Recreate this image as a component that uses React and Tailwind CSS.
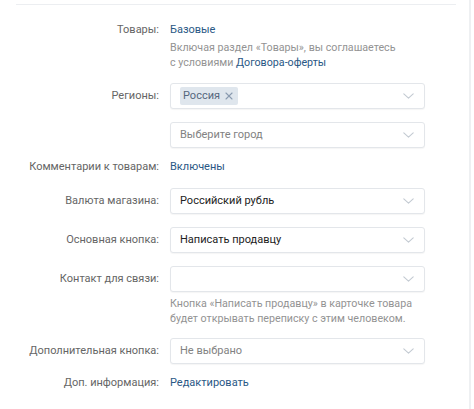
import { X } from 'lucide-react';

function Chevron() {
    return (
        <svg width="11" height="6" viewBox="0 0 11 6" className="shrink-0 mr-[2px]">
            <path d="M0.8 0.8l4.7 4.4 4.7-4.4" fill="none" stroke="#c3cad2" strokeWidth="1.1" strokeLinecap="round" strokeLinejoin="round" />
        </svg>
    );
}

function Select({ children, className = '' }) {
    return (
        <div className={`h-[26px] w-[255px] flex items-center justify-between pl-[9px] pr-[8px] bg-white border border-[#e3e6ea] rounded-[3px] shadow-[0_1px_1px_rgba(0,0,0,0.04)] ${className}`}>
            <div className="flex items-center min-w-0">{children}</div>
            <Chevron />
        </div>
    );
}

function Row({ label, children, className = '' }) {
    return (
        <div className={`flex items-center ${className}`}>
            <div className="w-[160px] pr-[1px] text-right text-[#656565] shrink-0">{label}</div>
            <div className="ml-[10px]">{children}</div>
        </div>
    );
}

export default function App() {
    return (
        <div className="w-[474px] h-[409px] bg-white overflow-hidden text-[11px] leading-[18px] font-['Roboto','Liberation_Sans',sans-serif]">
            <div className="w-[471px] h-full border-r-[2px] border-[#eef0f2]">
                {/* top divider */}
                <div className="pt-[4px]">
                    <div className="ml-[16px] w-[440px] h-px bg-[#eceef1]" />
                </div>

                <Row label="Товары:" className="mt-[16px]">
                    <span className="text-[#2a5885]">Базовые</span>
                </Row>
                <div className="ml-[170px] text-[10.7px] leading-[15px] text-[#939393] pt-[1px]">
                    Включая раздел «Товары», вы соглашаетесь<br />
                    с условиями <span className="text-[#2a5885]">Договора-оферты</span>
                </div>

                <Row label="Регионы:" className="mt-[13px]">
                    <Select className="pl-[6px]">
                        <span className="h-[18px] flex items-center gap-[3px] pl-[3px] pr-[3px] rounded-[2px] bg-[#dfe6ed] text-[#55677d]">
                            Россия
                            <X className="w-[12px] h-[12px] text-[#8a9bb0]" strokeWidth={2.2} />
                        </span>
                    </Select>
                </Row>

                <div className="ml-[170px] mt-[13px]">
                    <Select>
                        <span className="text-[#828282]">Выберите город</span>
                    </Select>
                </div>

                <Row label="Комментарии к товарам:" className="mt-[10px]">
                    <span className="text-[#2a5885]">Включены</span>
                </Row>

                <Row label="Валюта магазина:" className="mt-[12px]">
                    <Select>
                        <span className="text-[#222]">Российский рубль</span>
                    </Select>
                </Row>

                <Row label="Основная кнопка:" className="mt-[13px]">
                    <Select>
                        <span className="text-[#222]">Написать продавцу</span>
                    </Select>
                </Row>

                <Row label="Контакт для связи:" className="mt-[13px]">
                    <Select />
                </Row>
                <div className="ml-[170px] mt-[4px] text-[10.7px] leading-[15px] text-[#939393]">
                    Кнопка «Написать продавцу» в карточке товара<br />
                    будет открывать переписку с этим человеком.
                </div>

                <Row label="Дополнительная кнопка:" className="mt-[12px]">
                    <Select>
                        <span className="text-[#828282]">Не выбрано</span>
                    </Select>
                </Row>

                <Row label="Доп. информация:" className="mt-[10px]">
                    <span className="text-[#2a5885]">Редактировать</span>
                </Row>
            </div>
        </div>
    );
}
